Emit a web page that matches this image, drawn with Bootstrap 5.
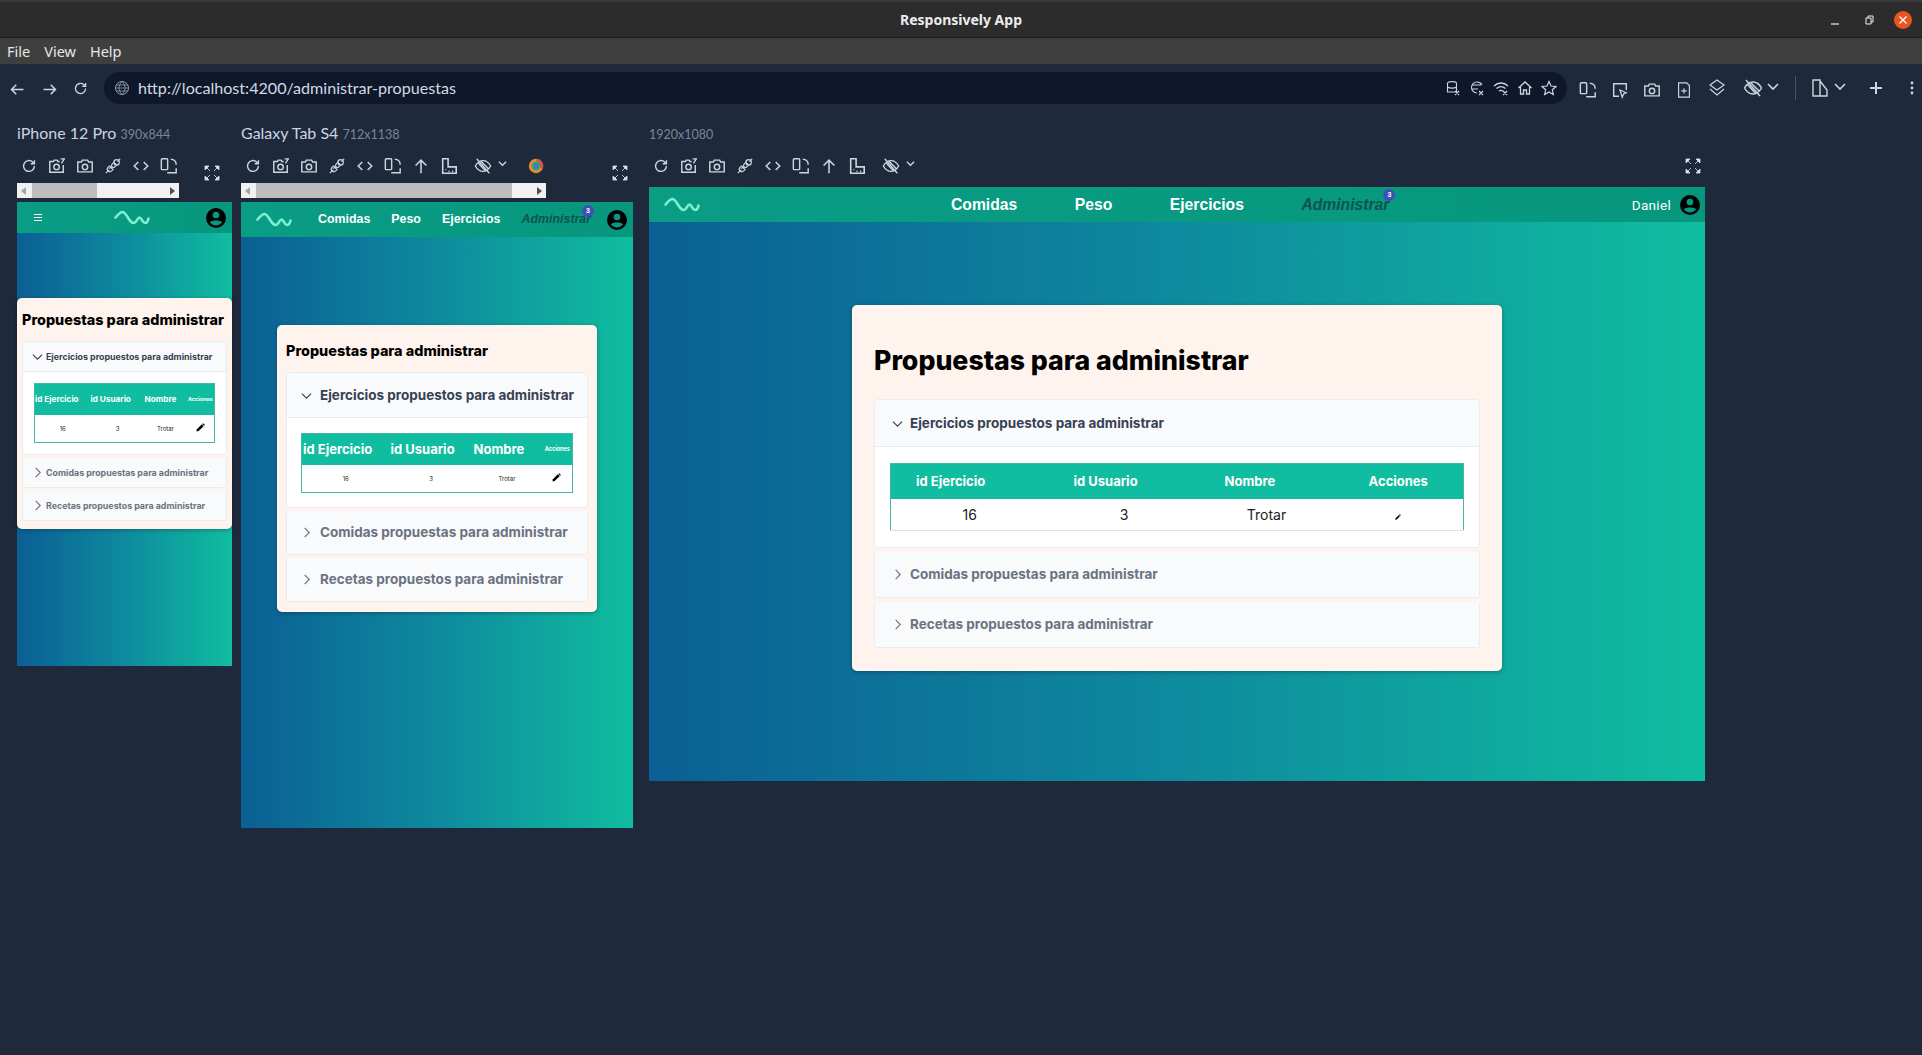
<!DOCTYPE html>
<html lang="es">
<head>
  <meta charset="UTF-8">
  <meta name="viewport" content="width=device-width, initial-scale=1.0">
  <title>Responsively App</title>
  <link href="https://cdn.jsdelivr.net/npm/bootstrap@5.3.3/dist/css/bootstrap.min.css" rel="stylesheet">
  <style>
    html, body { height: 100%; }
    body { background: #1e293b; font-family: "Lato", sans-serif; color: #cbd5e1; overflow: hidden; }

    /* ventana */
    .title-bar { flex: none; height: 38px; background: #2c2c2c; border-top: 2px solid #3a3a3a; border-bottom: 1px solid #1b1b1b; font: 700 14px "Noto Sans", sans-serif; color: #ececec; }
    .win-btn { width: 34px; height: 20px; color: #eee; }
    .win-close { width: 18px; height: 18px; background: #e95420; border-radius: 50%; color: #fff; margin-left: 8px; margin-right: 10px; }
    .menu-bar { flex: none; height: 26px; background: #3f3f3f; font: 400 14.5px "Noto Sans", sans-serif; color: #e6e6e6; padding-left: 7px; gap: 14px; }

    .tool-bar { flex: none; height: 48px; padding: 8px 0 8px 9px; }
    .tool-ico { width: 20px; height: 20px; color: #cbd5e1; flex: none; }
    .tool-slot { width: 32px; }
    .tool-slot .tool-ico { width: 18px; height: 18px; }
    .tool-slot .nav-arrow, .nav-arrow { width: 17px; height: 17px; }
    .url-box { flex: none; width: 1463px; height: 32px; margin-left: 15px; background: #0f172a; border-radius: 16px; padding: 0 10px 0 10px; font-size: 16.1px; color: #d3dae4; }
    .url-box .tool-ico { width: 16px; height: 16px; }
    .url-icons { gap: 8px; }
    .right-tools { margin-left: 12px; }
    .sep-line { width: 1px; height: 24px; background: #475569; margin: 0 14px 0 12px; }

    /* dispositivos */
    .devices { padding-left: 17px; flex: 1; min-height: 0; }
    .device-col { flex: none; }
    .dev-label { height: 24px; margin-top: 9px; font-size: 16px; color: #cbd5e1; white-space: nowrap; line-height: 24px; }
    .dev-label small { font-size: 12.5px; color: #7b8797; }
    .dev-tools { margin-top: 9px; }
    .dev-icons { height: 24px; margin-left: 3px; }
    .dev-icons .tool-ico { width: 18px; height: 18px; margin-right: 10px; }
    .dev-icons .ico-chev { width: 9px; height: 9px; margin: -6px 8px 0 -4px; }
    .ico-eye { margin-left: 6px; }
    .ico-browser { margin-left: 12px; }
    .ico-full { width: 16px; height: 16px; color: #dbe2ea; margin-top: 11px; }
    .fake-scroll { height: 15px; margin-top: 5px; background: #f1f1f1; padding: 0 4px 0 15px; }
    .fake-scroll i { display: block; height: 15px; background: #bdbdbd; }
    .fake-scroll b { display: block; width: 0; height: 0; border: 4px solid transparent; border-left: 5px solid #505050; border-right: 0; }
    .fake-scroll .arrow-left { border-left: 0; border-right: 5px solid #a3a3a3; position: absolute; margin-left: -11px; }
    .phone-scroll { width: 162px; }
    .phone-scroll i { width: 65px; }
    .tablet-scroll { width: 305px; }
    .tablet-scroll i { width: 256px; }

    .view-port { background: linear-gradient(90deg, #0b5f94 0%, #0e8a9e 50%, #10bd9f 100%); margin-top: 4px; }
    .dev-phone .view-port { width: 215px; height: 464px; }
    .dev-tablet .view-port { width: 392px; height: 626px; }
    .dev-desk .view-port { width: 1056px; height: 594px; margin-top: 9px; }
    .dev-phone { width: 224px; }
    .dev-tablet { width: 408px; }
    .dev-desk { width: 1056px; }
    .dev-phone .dev-tools { width: 215px; }
    .dev-tablet .dev-tools { width: 392px; }
    .dev-phone .ico-full { margin-right: 12px; }
    .dev-tablet .ico-full { margin-right: 5px; }
    .dev-desk .ico-full { margin-top: 0; margin-right: 4px; }

    .app-nav { background: linear-gradient(90deg, #0a9c84 0%, #07977f 100%); font-family: "Liberation Sans", sans-serif; font-weight: 700; color: #fff; }
    .dev-phone .app-nav { height: 31px; padding: 0 6px 0 17px; }
    .dev-tablet .app-nav { height: 35px; padding: 0 6px 0 15px; }
    .dev-desk .app-nav { height: 35px; padding: 0 5px 0 15px; }
    .wave { flex: none; width: 36px; height: 15px; }
    .dev-phone .wave { margin-left: 72px; }
    .burger { width: 8px; height: 7px; border-top: 1px solid #fff; border-bottom: 1px solid #fff; position: relative; }
    .burger::after { content: ""; position: absolute; left: 0; right: 0; top: 2px; border-top: 1px solid #fff; }
    .avatar { width: 20px; height: 20px; flex: none; }
    .nav-row { font-size: 12.4px; gap: 21px; margin-left: 26px; white-space: nowrap; }
    .dev-desk .nav-row { font-size: 15.7px; gap: 57.5px; margin-left: 251px; }
    .nav-row a { color: #fff; text-decoration: none; }
    .nav-row a.nav-on { color: #0c5450; font-style: italic; }
    .note-dot { top: -5px; right: -3px; width: 12px; height: 12px; padding: 0; background: #3f51b5; font: 700 7px/12px "Liberation Sans", sans-serif; color: #fff; }
    .dev-desk .note-dot { top: -4px; right: -6px; }
    .user-name { font: 400 13.5px "Roboto", sans-serif; margin-right: 9px; letter-spacing: .3px; }

    /* tarjeta */
    .admin-main { flex: 1; }
    .dev-phone .admin-main { padding-top: 65px; }
    .dev-tablet .admin-main { padding: 88px 36px 0; }
    .dev-desk .admin-main { padding: 83px 203px 0; }
    .admin-box { background: #fff4ed; border-radius: 5px; box-shadow: 0 1px 4px rgba(0,0,0,.3); font-family: "Inter", sans-serif; }
    .dev-phone .admin-box { padding: 10px 5px 8px; }
    .dev-tablet .admin-box { padding: 14px 9px 10px; }
    .dev-desk .admin-box { padding: 25px 22px 23px; }
    .admin-title { font-weight: 800; color: #000; margin: 0 0 9px; white-space: nowrap; font-family: "Inter", sans-serif; }
    .dev-phone .admin-title, .dev-tablet .admin-title { font-size: 14.4px; line-height: 24px; }
    .dev-desk .admin-title { font-size: 26.7px; line-height: 60px; }

    .accordion-item { border: 1px solid #e8ebef; border-radius: 4px !important; margin-bottom: 3px; background: #fff; overflow: hidden; }
    .accordion-item:last-child { margin-bottom: 0; }
    .dev-desk .accordion-item { margin-bottom: 4px; }
    .dev-desk .accordion-item:last-child { margin-bottom: 0; }
    .accordion-button { background: #f8fafc; color: #6b7280; font-weight: 700; box-shadow: none !important; padding: 0; gap: 8px; white-space: nowrap; font-family: "Inter", sans-serif; }
    .accordion-button:not(.collapsed) { background: #f8fafc; color: #374151; box-shadow: none; border-bottom: 1px solid #e8ebef; }
    .accordion-button::after { display: none; }
    .chev { flex: none; width: 11px; height: 11px; }
    .dev-phone .accordion-button { height: 29px; font-size: 8.85px; padding-left: 9px; gap: 3px; }
    .dev-phone .accordion-button:not(.collapsed) { height: 30px; }
    .dev-tablet .accordion-button { height: 43px; font-size: 13.5px; padding-left: 14px; gap: 8px; }
    .dev-tablet .accordion-button:not(.collapsed) { height: 45px; }
    .dev-desk .accordion-button { height: 45px; font-size: 13.5px; padding-left: 17px; gap: 7px; }
    .dev-desk .accordion-button:not(.collapsed) { height: 47px; }
    .dev-phone .accordion-body { padding: 11px 11px 11px; }
    .dev-tablet .accordion-body { padding: 15px 14px 14px; }
    .dev-desk .accordion-body { padding: 16px 15px 16px; }

    .prop-table { table-layout: fixed; margin: 0; border: 1px solid #45b7a4; width: 100%; --bs-table-bg: transparent; }
    .prop-table th { background: #10bda0; color: #fff; font-weight: 700; border: 0; vertical-align: middle; white-space: nowrap; padding: 0; }
    .prop-table td { text-align: center; vertical-align: middle; border: 0; color: #222; padding: 0; }
    .ico-pen { vertical-align: baseline; }
    .dev-phone .prop-table th { height: 31px; font-size: 8.2px; }
    .dev-phone .prop-table td { height: 28px; font-size: 6px; }
    .dev-phone th:nth-child(1) { width: 56px; }
    .dev-phone th:nth-child(2) { width: 54px; }
    .dev-phone th:nth-child(3) { width: 42px; }
    .dev-phone .prop-table th:nth-child(4) { font-size: 5.4px; }
    .dev-phone .ico-pen, .dev-tablet .ico-pen { width: 9px; height: 9px; }
    .dev-tablet .prop-table th { height: 31px; font-size: 13px; padding-left: 1px; }
    .dev-tablet .prop-table td { height: 28px; font-size: 6px; }
    .dev-tablet th:nth-child(1) { width: 88px; }
    .dev-tablet th:nth-child(2) { width: 83px; }
    .dev-tablet th:nth-child(3) { width: 69px; }
    .dev-tablet .prop-table th:nth-child(4) { font-size: 5.5px; }
    .dev-desk .prop-table { border-bottom-color: #cfe6e2; }
    .dev-desk .prop-table th { height: 35px; font-size: 13px; padding-left: 25px; }
    .dev-desk .prop-table td { height: 32px; font-size: 14px; }
    .dev-desk th:nth-child(1) { width: 158px; }
    .dev-desk th:nth-child(2) { width: 151px; }
    .dev-desk th:nth-child(3) { width: 134px; }
    .dev-desk .prop-table th:nth-child(4) { padding-left: 0; text-align: center; }
    .dev-desk .ico-pen { width: 6px; height: 6px; }
    .prop-table th:nth-child(4) { text-align: center; }
  </style>
</head>
<body>

  <!-- iconos -->
  <svg width="0" height="0" class="position-absolute">
    <defs>
      <symbol id="i-reload" viewBox="0 0 20 20"><path d="M16 10a6 6 0 1 1-2-4.500L16 7.500M16 3.500v4h-4" fill="none" stroke="currentColor" stroke-width="1.600"/></symbol>
      <symbol id="i-shots" viewBox="0 0 20 20"><path d="M13 5H11L10 3.500H7L6 5H2v12h15V9" fill="none" stroke="currentColor" stroke-width="1.600"/><circle cx="9.500" cy="11" r="3" fill="none" stroke="currentColor" stroke-width="1.600"/><path d="M15 7l3-5M14 2h5" stroke="currentColor" stroke-width="1.500"/></symbol>
      <symbol id="i-cam" viewBox="0 0 20 20"><path d="M2 5.500h4L7 3.500h6l1 2h4v11H2z" fill="none" stroke="currentColor" stroke-width="1.600"/><circle cx="10" cy="11" r="3" fill="none" stroke="currentColor" stroke-width="1.600"/></symbol>
      <symbol id="i-plug" viewBox="0 0 20 20"><path d="M2 18l4-4M18 2l-3 3M11 6l3 3-2 2a2 2 0 0 1-3-3zM9 10l-3 3M6 10l4 4-1.500 1.500a2.800 2.800 0 0 1-4-4z" fill="none" stroke="currentColor" stroke-width="1.300"/><circle cx="14" cy="6" r="3" fill="none" stroke="currentColor" stroke-width="1.300"/></symbol>
      <symbol id="i-code" viewBox="0 0 20 20"><path d="M7 5.500L2.500 10 7 14.500M13 5.500l4.500 4.500-4.500 4.500" fill="none" stroke="currentColor" stroke-width="1.700"/></symbol>
      <symbol id="i-rotate" viewBox="0 0 20 20"><rect x="1.500" y="2" width="7" height="12" rx="1" fill="none" stroke="currentColor" stroke-width="1.600"/><path d="M12 2.500c3 0 6 2 6 6M8 17.500h10v-5" fill="none" stroke="currentColor" stroke-width="1.600"/></symbol>
      <symbol id="i-up" viewBox="0 0 20 20"><path d="M10 18V4M4 9.500L10 3.500l6 6" fill="none" stroke="currentColor" stroke-width="1.700"/></symbol>
      <symbol id="i-ruler" viewBox="0 0 20 20"><path d="M3 2h6v9h9v7H3z" fill="none" stroke="currentColor" stroke-width="1.800"/><path d="M6 14h1M10 15v2M14 15v2" stroke="currentColor" stroke-width="1.200"/></symbol>
      <symbol id="i-eye" viewBox="0 0 20 20"><path d="M1.500 10C4 5.500 7 4 10 4s6 1.500 8.500 6c-2.500 4.500-5.500 6-8.500 6s-6-1.500-8.500-6zM3 2l14 16M5 7l8 9M8 5l8 8" fill="none" stroke="currentColor" stroke-width="1.500"/></symbol>
      <symbol id="i-chev" viewBox="0 0 10 10"><path d="M1 3l4 4 4-4" fill="none" stroke="currentColor" stroke-width="1.500"/></symbol>
      <symbol id="i-full" viewBox="0 0 16 16"><path d="M1 1h4L1 5zM15 1h-4l4 4zM1 15h4l-4-4zM15 15h-4l4-4zM3 3l3 3M13 3l-3 3M3 13l3-3M13 13l-3-3" fill="currentColor" stroke="currentColor" stroke-width=".800"/></symbol>
      <symbol id="i-avatar" viewBox="0 0 20 20"><circle cx="10" cy="10" r="10" fill="#000"/><circle cx="10" cy="7" r="3.300" fill="#079a82"/><path d="M3.800 14.200c2-2.400 10.400-2.400 12.400 0-1.400 2-3.800 3.200-6.200 3.200s-4.800-1.200-6.200-3.200z" fill="#079a82"/></symbol>
      <symbol id="i-wave" viewBox="0 0 36 15"><path d="M1.500 7.500C4 4.500 6 2 8.500 2c4 0 6.500 11 11 11 3 0 4-5.500 6-5.500s3 5.500 5.500 5.500c1.500 0 3-2 3.500-4.500" fill="none" stroke="#7df0cf" stroke-width="2.600" stroke-linecap="round"/></symbol>
      <symbol id="i-right" viewBox="0 0 12 12"><path d="M4 1l5 5-5 5" fill="none" stroke="currentColor" stroke-width="1.200"/></symbol>
      <symbol id="i-down" viewBox="0 0 12 12"><path d="M1 4l5 5 5-5" fill="none" stroke="currentColor" stroke-width="1.200"/></symbol>
      <symbol id="i-pen" viewBox="0 0 10 10"><path d="M.5 9.500l.5-2.500 5.500-5.500 2 2L3 9z" fill="#000"/><path d="M7 1l1-.800 1.800 1.800-.8 1z" fill="#000"/></symbol>
    </defs>
  </svg>

  <div class="d-flex flex-column vh-100">
    <!-- barra de titulo -->
    <div class="title-bar d-flex align-items-center position-relative">
      <div class="flex-grow-1 text-center">Responsively App</div>
      <div class="d-flex align-items-center position-absolute top-0 end-0 h-100">
        <svg class="win-btn" viewBox="0 0 34 20"><path d="M13 14h8" stroke="currentColor" stroke-width="1.200"/></svg>
        <svg class="win-btn" viewBox="0 0 34 20"><path d="M14 8h5v6h-5zM16 8V6h5v6h-2" fill="none" stroke="currentColor"/></svg>
        <svg class="win-close" viewBox="0 0 18 18"><path d="M5.500 5.500l7 7M12.500 5.500l-7 7" stroke="currentColor" stroke-width="1.300"/></svg>
      </div>
    </div>
    <div class="menu-bar d-flex align-items-center"><span>File</span><span>View</span><span>Help</span></div>

    <!-- barra de direccion -->
    <div class="tool-bar d-flex align-items-center">
      <div class="tool-slot"><svg class="tool-ico nav-arrow" viewBox="0 0 20 20"><path d="M17 10H3M8.500 4.500L3 10l5.500 5.500" fill="none" stroke="currentColor" stroke-width="1.800"/></svg></div>
      <div class="tool-slot"><svg class="tool-ico nav-arrow" viewBox="0 0 20 20"><path d="M3 10h14M11.500 4.500L17 10l-5.500 5.500" fill="none" stroke="currentColor" stroke-width="1.800"/></svg></div>
      <svg class="tool-ico nav-arrow"><use href="#i-reload"/></svg>
      <div class="url-box d-flex align-items-center">
        <svg class="tool-ico me-2" viewBox="0 0 16 16"><circle cx="8" cy="8" r="6.500" fill="none" stroke="#94a3b8"/><path d="M1.500 8h13M2.500 5h11M2.500 11h11M8 1.500c-4 4-4 9 0 13M8 1.500c4 4 4 9 0 13" fill="none" stroke="#94a3b8" stroke-width=".8"/></svg>
        <span>http://localhost:4200/administrar-propuestas</span>
        <div class="url-icons d-flex ms-auto">
          <svg class="tool-ico" viewBox="0 0 16 16"><path d="M2.500 3.500c0-2.500 9-2.500 9 0v8.500H2.500zM2.500 7c2 1.500 7 1.500 9 0M10 11l4 4M14 11l-4 4" fill="none" stroke="currentColor" stroke-width="1.100"/></svg>
          <svg class="tool-ico" viewBox="0 0 16 16"><path d="M8 2a5.500 5.500 0 1 0 0 11M8 2c2 0 4 1 5 3M3 5h9M3 9h6M10 11l4 4M14 11l-4 4" fill="none" stroke="currentColor" stroke-width="1.100"/></svg>
          <svg class="tool-ico" viewBox="0 0 16 16"><path d="M1 6c4-4 10-4 14 0M3.500 8.500c3-2.500 6-2.500 9 0M6 11c1.500-1 2.500-1 4 0M10 11l4 4M14 11l-4 4" fill="none" stroke="currentColor" stroke-width="1.300"/></svg>
          <svg class="tool-ico" viewBox="0 0 16 16"><path d="M1.500 8L8 2l6.500 6M3.500 7v7h3v-4h3v4h3V7" fill="none" stroke="currentColor" stroke-width="1.300"/></svg>
          <svg class="tool-ico" viewBox="0 0 16 16"><path d="M8 1.500l2 4.500 5 .5-3.700 3.300 1 4.700L8 12l-4.300 2.500 1-4.700L1 6.500 6 6z" fill="none" stroke="currentColor" stroke-width="1.200"/></svg>
        </div>
      </div>
      <div class="right-tools d-flex align-items-center">
        <div class="tool-slot"><svg class="tool-ico"><use href="#i-rotate"/></svg></div>
        <div class="tool-slot"><svg class="tool-ico" viewBox="0 0 20 20"><path d="M9 17H3V3h14v7" fill="none" stroke="currentColor" stroke-width="1.600"/><path d="M10 10l7 3-3 1.500-1.500 3.500z" fill="none" stroke="currentColor" stroke-width="1.400"/></svg></div>
        <div class="tool-slot"><svg class="tool-ico"><use href="#i-cam"/></svg></div>
        <div class="tool-slot"><svg class="tool-ico" viewBox="0 0 20 20"><path d="M4 2h9l3 3v13H4zM10 8v6M7 11h6" fill="none" stroke="currentColor" stroke-width="1.300"/></svg></div>
        <svg class="tool-ico" viewBox="0 0 20 20"><path d="M10 2l7 5-7 5-7-5zM3 11l7 6 7-6" fill="none" stroke="currentColor" stroke-width="1.200"/></svg>
        <svg class="tool-ico ms-3"><use href="#i-eye"/></svg>
        <svg class="tool-ico" viewBox="0 0 10 10"><path d="M2.500 3l2.500 2.500L7.500 3" fill="none" stroke="currentColor" stroke-width=".8"/></svg>
        <div class="sep-line"></div>
        <svg class="tool-ico" viewBox="0 0 20 20"><path d="M3 2h7v16H3zM10 3l7 9v6h-7" fill="none" stroke="currentColor" stroke-width="1.400"/></svg>
        <svg class="tool-ico" viewBox="0 0 10 10"><path d="M2.500 3l2.500 2.500L7.500 3" fill="none" stroke="currentColor" stroke-width=".8"/></svg>
        <svg class="tool-ico ms-3" viewBox="0 0 20 20"><path d="M10 4v12M4 10h12" stroke="currentColor" stroke-width="2"/></svg>
        <svg class="tool-ico ms-3" viewBox="0 0 20 20"><circle cx="10" cy="5" r="1.400" fill="currentColor"/><circle cx="10" cy="10" r="1.400" fill="currentColor"/><circle cx="10" cy="15" r="1.400" fill="currentColor"/></svg>
      </div>
    </div>

    <div class="devices d-flex">

      <!-- iPhone -->
      <section class="device-col dev-phone">
        <div class="dev-label">iPhone 12 Pro <small>390x844</small></div>
        <div class="dev-tools d-flex">
          <div>
            <div class="dev-icons d-flex align-items-center">
              <svg class="tool-ico"><use href="#i-reload"/></svg>
              <svg class="tool-ico"><use href="#i-shots"/></svg>
              <svg class="tool-ico"><use href="#i-cam"/></svg>
              <svg class="tool-ico"><use href="#i-plug"/></svg>
              <svg class="tool-ico"><use href="#i-code"/></svg>
              <svg class="tool-ico"><use href="#i-rotate"/></svg>
            </div>
            <div class="fake-scroll phone-scroll d-flex align-items-center justify-content-between">
              <b class="arrow-left"></b><i></i><b></b>
            </div>
          </div>
          <svg class="tool-ico ico-full ms-auto"><use href="#i-full"/></svg>
        </div>
        <div class="view-port d-flex flex-column">
          <nav class="app-nav d-flex align-items-center">
            <div class="burger"></div>
            <svg class="wave"><use href="#i-wave"/></svg>
            <svg class="avatar ms-auto"><use href="#i-avatar"/></svg>
          </nav>
          <div class="admin-main">
            <div class="admin-box">
              <h1 class="admin-title">Propuestas para administrar</h1>
              <div class="accordion">
                <div class="accordion-item">
                  <button class="accordion-button" type="button"><svg class="chev"><use href="#i-down"/></svg>Ejercicios propuestos para administrar</button>
                  <div class="accordion-body">
                    <table class="table prop-table">
                      <thead><tr><th>id Ejercicio</th><th>id Usuario</th><th>Nombre</th><th>Acciones</th></tr></thead>
                      <tbody><tr><td>16</td><td>3</td><td>Trotar</td><td><svg class="ico-pen"><use href="#i-pen"/></svg></td></tr></tbody>
                    </table>
                  </div>
                </div>
                <div class="accordion-item">
                  <button class="accordion-button collapsed" type="button"><svg class="chev"><use href="#i-right"/></svg>Comidas propuestas para administrar</button>
                </div>
                <div class="accordion-item">
                  <button class="accordion-button collapsed" type="button"><svg class="chev"><use href="#i-right"/></svg>Recetas propuestos para administrar</button>
                </div>
              </div>
            </div>
          </div>
        </div>
      </section>

      <!-- Galaxy Tab -->
      <section class="device-col dev-tablet">
        <div class="dev-label">Galaxy Tab S4 <small>712x1138</small></div>
        <div class="dev-tools d-flex">
          <div>
            <div class="dev-icons d-flex align-items-center">
              <svg class="tool-ico"><use href="#i-reload"/></svg>
              <svg class="tool-ico"><use href="#i-shots"/></svg>
              <svg class="tool-ico"><use href="#i-cam"/></svg>
              <svg class="tool-ico"><use href="#i-plug"/></svg>
              <svg class="tool-ico"><use href="#i-code"/></svg>
              <svg class="tool-ico"><use href="#i-rotate"/></svg>
              <svg class="tool-ico"><use href="#i-up"/></svg>
              <svg class="tool-ico"><use href="#i-ruler"/></svg>
              <svg class="tool-ico ico-eye"><use href="#i-eye"/></svg>
              <svg class="tool-ico ico-chev"><use href="#i-chev"/></svg>
              <svg class="tool-ico ico-browser" viewBox="0 0 20 20"><circle cx="10" cy="10" r="8" fill="#ef8a2c"/><path d="M10 2a8 8 0 0 1 7 12l-5-4z" fill="#d94f4f"/><circle cx="10" cy="10" r="5" fill="#3aa76d"/><circle cx="10" cy="10" r="3.200" fill="#3b82c4"/></svg>
            </div>
            <div class="fake-scroll tablet-scroll d-flex align-items-center justify-content-between">
              <b class="arrow-left"></b><i></i><b></b>
            </div>
          </div>
          <svg class="tool-ico ico-full ms-auto"><use href="#i-full"/></svg>
        </div>
        <div class="view-port d-flex flex-column">
          <nav class="app-nav d-flex align-items-center">
            <svg class="wave"><use href="#i-wave"/></svg>
            <div class="nav-row d-flex">
              <a href="#">Comidas</a><a href="#">Peso</a><a href="#">Ejercicios</a>
              <a href="#" class="nav-on position-relative">Administrar<span class="badge rounded-pill position-absolute note-dot">3</span></a>
            </div>
            <svg class="avatar ms-auto"><use href="#i-avatar"/></svg>
          </nav>
          <div class="admin-main">
            <div class="admin-box">
              <h1 class="admin-title">Propuestas para administrar</h1>
              <div class="accordion">
                <div class="accordion-item">
                  <button class="accordion-button" type="button"><svg class="chev"><use href="#i-down"/></svg>Ejercicios propuestos para administrar</button>
                  <div class="accordion-body">
                    <table class="table prop-table">
                      <thead><tr><th>id Ejercicio</th><th>id Usuario</th><th>Nombre</th><th>Acciones</th></tr></thead>
                      <tbody><tr><td>16</td><td>3</td><td>Trotar</td><td><svg class="ico-pen"><use href="#i-pen"/></svg></td></tr></tbody>
                    </table>
                  </div>
                </div>
                <div class="accordion-item">
                  <button class="accordion-button collapsed" type="button"><svg class="chev"><use href="#i-right"/></svg>Comidas propuestas para administrar</button>
                </div>
                <div class="accordion-item">
                  <button class="accordion-button collapsed" type="button"><svg class="chev"><use href="#i-right"/></svg>Recetas propuestos para administrar</button>
                </div>
              </div>
            </div>
          </div>
        </div>
      </section>

      <!-- Escritorio -->
      <section class="device-col dev-desk">
        <div class="dev-label"><small>1920x1080</small></div>
        <div class="dev-tools d-flex align-items-center">
          <div class="dev-icons d-flex align-items-center">
            <svg class="tool-ico"><use href="#i-reload"/></svg>
            <svg class="tool-ico"><use href="#i-shots"/></svg>
            <svg class="tool-ico"><use href="#i-cam"/></svg>
            <svg class="tool-ico"><use href="#i-plug"/></svg>
            <svg class="tool-ico"><use href="#i-code"/></svg>
            <svg class="tool-ico"><use href="#i-rotate"/></svg>
            <svg class="tool-ico"><use href="#i-up"/></svg>
            <svg class="tool-ico"><use href="#i-ruler"/></svg>
            <svg class="tool-ico ico-eye"><use href="#i-eye"/></svg>
            <svg class="tool-ico ico-chev"><use href="#i-chev"/></svg>
          </div>
          <svg class="tool-ico ico-full ms-auto"><use href="#i-full"/></svg>
        </div>
        <div class="view-port d-flex flex-column">
          <nav class="app-nav d-flex align-items-center">
            <svg class="wave"><use href="#i-wave"/></svg>
            <div class="nav-row d-flex">
              <a href="#">Comidas</a><a href="#">Peso</a><a href="#">Ejercicios</a>
              <a href="#" class="nav-on position-relative">Administrar<span class="badge rounded-pill position-absolute note-dot">3</span></a>
            </div>
            <span class="user-name ms-auto">Daniel</span>
            <svg class="avatar"><use href="#i-avatar"/></svg>
          </nav>
          <div class="admin-main">
            <div class="admin-box">
              <h1 class="admin-title">Propuestas para administrar</h1>
              <div class="accordion">
                <div class="accordion-item">
                  <button class="accordion-button" type="button"><svg class="chev"><use href="#i-down"/></svg>Ejercicios propuestos para administrar</button>
                  <div class="accordion-body">
                    <table class="table prop-table">
                      <thead><tr><th>id Ejercicio</th><th>id Usuario</th><th>Nombre</th><th>Acciones</th></tr></thead>
                      <tbody><tr><td>16</td><td>3</td><td>Trotar</td><td><svg class="ico-pen"><use href="#i-pen"/></svg></td></tr></tbody>
                    </table>
                  </div>
                </div>
                <div class="accordion-item">
                  <button class="accordion-button collapsed" type="button"><svg class="chev"><use href="#i-right"/></svg>Comidas propuestas para administrar</button>
                </div>
                <div class="accordion-item">
                  <button class="accordion-button collapsed" type="button"><svg class="chev"><use href="#i-right"/></svg>Recetas propuestos para administrar</button>
                </div>
              </div>
            </div>
          </div>
        </div>
      </section>

    </div>
  </div>

  <script src="https://cdn.jsdelivr.net/npm/bootstrap@5.3.3/dist/js/bootstrap.bundle.min.js"></script>
</body>
</html>
